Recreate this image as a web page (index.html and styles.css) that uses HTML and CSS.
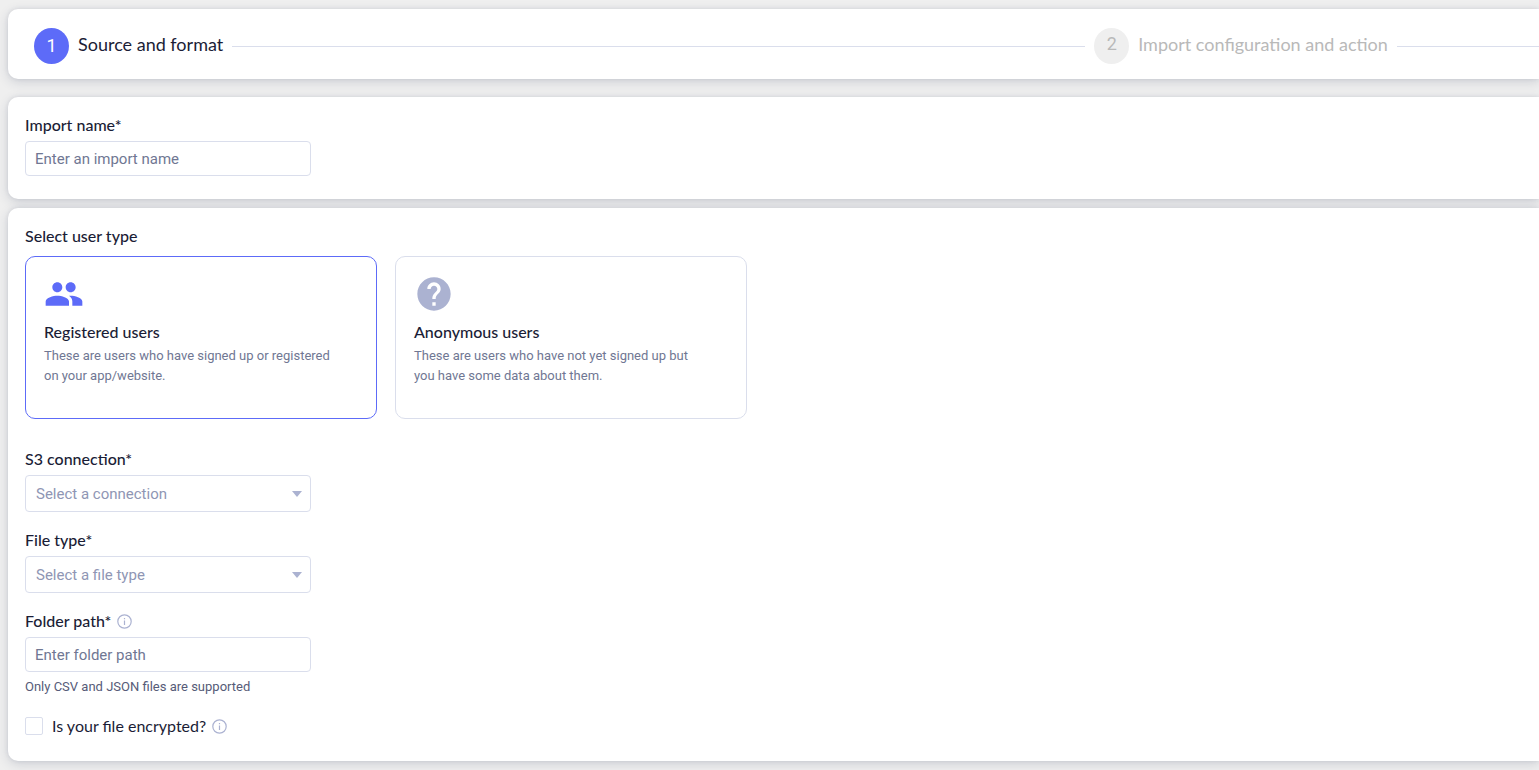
FILE: index.html
```html
<!DOCTYPE html>
<html lang="en">
<head>
  <meta charset="utf-8">
  <meta name="viewport" content="width=device-width, initial-scale=1">
  <title>Import users</title>
  <link rel="stylesheet" href="styles.css">
</head>
<body>
  <main class="page">
    <ol class="panel stepper">
      <li class="step step-active" aria-current="step">
        <span class="step-number">1</span>
        <span class="step-label">Source and format</span>
      </li>
      <li class="step step-upcoming">
        <span class="step-number">2</span>
        <span class="step-label">Import configuration and action</span>
      </li>
    </ol>

    <section class="panel name-panel">
      <div class="field">
        <label class="field-label" for="import-name">Import name*</label>
        <input class="control" id="import-name" type="text" placeholder="Enter an import name">
      </div>
    </section>

    <section class="panel source-panel">
      <fieldset class="user-types">
        <legend class="field-label">Select user type</legend>
        <div class="type-list">
          <label class="type-card">
            <input class="type-radio" type="radio" name="user-type" value="registered" checked>
            <svg class="type-icon" viewBox="0 0 24 24" aria-hidden="true"><path d="M16 11c1.66 0 2.99-1.34 2.99-3S17.66 5 16 5s-3 1.34-3 3 1.34 3 3 3zm-8 0c1.66 0 2.99-1.34 2.99-3S9.66 5 8 5 5 6.34 5 8s1.34 3 3 3zm0 2c-2.33 0-7 1.17-7 3.5V19h14v-2.5c0-2.33-4.67-3.5-7-3.5zm8 0c-.29 0-.62.02-.97.05 1.16.84 1.97 1.97 1.97 3.45V19h6v-2.5c0-2.33-4.67-3.5-7-3.5z"/></svg>
            <span class="type-title">Registered users</span>
            <span class="type-text">These are users who have signed up or registered on your app/website.</span>
          </label>
          <label class="type-card">
            <input class="type-radio" type="radio" name="user-type" value="anonymous">
            <svg class="type-icon" viewBox="0 0 24 24" aria-hidden="true"><path d="M12 2C6.48 2 2 6.48 2 12s4.48 10 10 10 10-4.48 10-10S17.52 2 12 2zm1 17h-2v-2h2v2zm2.07-7.75l-.9.92C13.45 12.9 13 13.5 13 15h-2v-.5c0-1.1.45-2.1 1.17-2.83l1.24-1.26c.37-.36.59-.86.59-1.41 0-1.1-.9-2-2-2s-2 .9-2 2H8c0-2.21 1.79-4 4-4s4 1.79 4 4c0 .88-.36 1.68-.93 2.25z"/></svg>
            <span class="type-title">Anonymous users</span>
            <span class="type-text">These are users who have not yet signed up but you have some data about them.</span>
          </label>
        </div>
      </fieldset>

      <div class="field">
        <label class="field-label" for="connection">S3 connection*</label>
        <div class="select-box">
          <select class="control select" id="connection"><option>Select a connection</option></select>
          <svg class="caret" viewBox="0 0 10 6" aria-hidden="true"><path d="M0 0h10L5 6z"/></svg>
        </div>
      </div>

      <div class="field">
        <label class="field-label" for="file-type">File type*</label>
        <div class="select-box">
          <select class="control select" id="file-type"><option>Select a file type</option></select>
          <svg class="caret" viewBox="0 0 10 6" aria-hidden="true"><path d="M0 0h10L5 6z"/></svg>
        </div>
      </div>

      <div class="field">
        <div class="label-row">
          <label class="field-label" for="folder-path">Folder path*</label>
          <svg class="info" viewBox="0 0 15 15" aria-hidden="true"><circle cx="7.5" cy="7.5" r="6.7"/><path d="M7.5 6.4v4.6M7.5 3.9v1.3"/></svg>
        </div>
        <input class="control" id="folder-path" type="text" placeholder="Enter folder path" aria-describedby="folder-help">
        <p class="help" id="folder-help">Only CSV and JSON files are supported</p>
      </div>

      <div class="check-row">
        <input class="checkbox" id="encrypted" type="checkbox">
        <label class="check-label" for="encrypted">Is your file encrypted?</label>
        <svg class="info" viewBox="0 0 15 15" aria-hidden="true"><circle cx="7.5" cy="7.5" r="6.7"/><path d="M7.5 6.4v4.6M7.5 3.9v1.3"/></svg>
      </div>
    </section>
  </main>
</body>
</html>
```

FILE: styles.css
```css
:root {
  --ink: #1b1d36;
  --muted: #707793;
  --soft: #8f96b4;
  --icon: #abb2d1;
  --line: #dadeec;
  --primary: #5d6bf8;
  --heading-font: Lato, "Open Sans", sans-serif;
}

* { box-sizing: border-box; }

body {
  margin: 0;
  background: #efefef;
  color: var(--ink);
  font: 15px/20px Roboto, "Open Sans", sans-serif;
}

.page {
  display: flex;
  flex-direction: column;
  padding: 9px 0 9px 8px;
  overflow: hidden;
}

.panel {
  margin: 0;
  background: #fff;
  border-radius: 10px 0 0 10px;
  box-shadow: 0 3px 12px rgba(40, 50, 90, 0.16), 0 0 4px rgba(40, 50, 90, 0.1);
}

.stepper {
  display: flex;
  gap: 9px;
  margin-bottom: 18px;
  padding: 19px 0 15px 26px;
  list-style: none;
}

.step {
  display: flex;
  align-items: center;
  flex: 1 0 auto;
  gap: 9px;
  min-height: 36px;
  font-size: 18px;
}

.step-active { flex-grow: 6; }

.step::after {
  content: "";
  flex: 1;
  height: 1px;
  background: var(--line);
}

.step-number {
  display: grid;
  place-items: center;
  width: 35px;
  height: 36px;
  border-radius: 50%;
  background: #efefef;
}

.step-label {
  padding-bottom: 5px;
  font-family: var(--heading-font);
}

.step-active .step-number {
  background: var(--primary);
  color: #fff;
}

.step-upcoming { color: #b9b9b9; }

.step-upcoming .step-number { padding-bottom: 4px; }

.name-panel {
  margin-bottom: 9px;
  padding: 18px 17px 23px;
}

.source-panel { padding: 18px 17px 25px; }

.field {
  display: flex;
  flex-direction: column;
  gap: 6px;
  max-width: 286px;
}

.field + .field { margin-top: 18px; }

.field-label,
.type-title {
  font: 500 16px/20px var(--heading-font);
}

.control {
  width: 100%;
  height: 35px;
  padding: 0 9px;
  border: 1px solid var(--line);
  border-radius: 4px;
  background: #fff;
  color: var(--ink);
  font: inherit;
}

.control::placeholder {
  color: var(--muted);
  opacity: 1;
}

.select-box { display: grid; }

.select-box > * { grid-area: 1 / 1; }

.select {
  height: 37px;
  padding: 0 10px;
  appearance: none;
  color: var(--soft);
}

.caret {
  place-self: center end;
  width: 10px;
  height: 6px;
  margin-right: 9px;
  fill: var(--icon);
  pointer-events: none;
}

.user-types {
  margin: 0 0 30px;
  padding: 0;
  border: 0;
}

.user-types legend {
  margin-bottom: 10px;
  padding: 0;
}

.type-list {
  display: flex;
  flex-wrap: wrap;
  gap: 18px;
}

.type-card {
  display: flex;
  flex-direction: column;
  width: 352px;
  padding: 17px 18px 32px;
  border: 1px solid var(--line);
  border-radius: 10px;
}

.type-card:has(.type-radio:checked) { border-color: var(--primary); }

.type-card:has(.type-radio:checked) .type-icon { fill: var(--primary); }

.type-radio {
  position: absolute;
  opacity: 0;
  pointer-events: none;
}

.type-icon {
  width: 40px;
  height: 40px;
  margin-bottom: 8px;
  fill: var(--icon);
}

.type-text {
  max-width: 294px;
  margin-top: 4px;
  color: var(--muted);
  font-size: 13px;
}

.label-row,
.check-row {
  display: flex;
  align-items: center;
}

.label-row { gap: 6px; }

.info {
  width: 15px;
  height: 15px;
  fill: none;
  stroke: var(--icon);
  stroke-width: 1.2;
}

.help {
  margin: 0;
  color: #565b78;
  font-size: 13px;
  line-height: 18px;
}

.check-row { margin-top: 20px; }

.checkbox {
  width: 18px;
  height: 18px;
  margin: 0 9px 0 0;
  border: 1px solid var(--line);
  border-radius: 2px;
  appearance: none;
  background: #fff;
}

.checkbox:checked { background: var(--primary); }

.check-label {
  margin-right: 6px;
  font: 16px/20px var(--heading-font);
}
```
